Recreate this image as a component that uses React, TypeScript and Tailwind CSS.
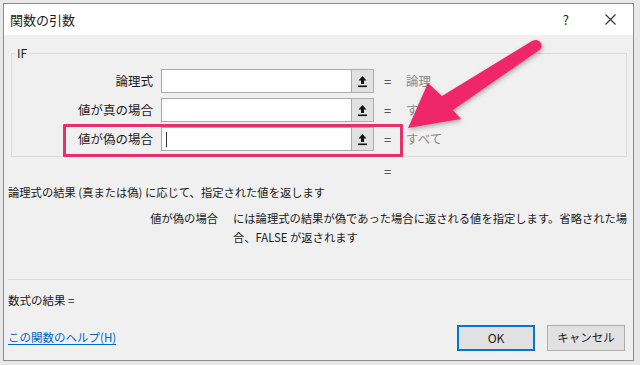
import React from 'react'

/* ==========================================================================
   ARGUMENT ROW
   ========================================================================== */

function ArgRow({ label, value, cursor }: { label: string; value: string; cursor?: boolean }) {
  return (
    <div className="flex items-center h-[24px]">
      <div className="w-[141px] text-right text-[12.5px] text-[#1a1a1a] leading-none">{label}</div>
      <div className="ml-[8px] w-[191px] h-[24px] bg-white border border-[#a9a9a9] flex items-center pl-[4px]">
        {cursor && <div className="w-[1px] h-[15px] bg-[#333]" />}
      </div>
      <div className="w-[22px] h-[24px] bg-[#e1e1e1] border border-[#adadad] border-l-0 flex items-center justify-center">
        <svg width="11" height="13" viewBox="0 0 11 13">
          <path d="M5.5 1 L1.5 5.5 H4 V9 H7 V5.5 H9.5 Z" fill="#111" />
          <rect x="1" y="10.5" width="9" height="1.6" fill="#111" />
        </svg>
      </div>
      <div className="ml-[10px] w-[8px] text-[13px] text-[#333] leading-none">=</div>
      <div className="ml-[14px] text-[12.5px] text-[#8a8a8a] leading-none">{value}</div>
    </div>
  )
}

/* ==========================================================================
   FUNCTION ARGUMENTS DIALOG
   ========================================================================== */

export default function App() {
  return (
    <div className="relative w-[640px] h-[365px] overflow-hidden bg-[#e8e8e8] pt-[3px] pl-[3px] font-['Noto_Sans_CJK_JP','Noto_Sans',sans-serif]">
      <div className="w-[631px] h-[358px] border border-[#8c8c8c] bg-[#f0f0f0] flex flex-col">
        {/* ── Title bar ─────────────────────────────────────────────── */}
        <div className="h-[31px] bg-white flex items-center pl-[6px] pr-[17px]">
          <span className="text-[13px] text-[#1a1a1a]">関数の引数</span>
          <span className="ml-auto text-[13px] text-[#222] leading-none">?</span>
          <svg className="ml-[36px]" width="11" height="11" viewBox="0 0 11 11">
            <path d="M0.5 0.5 L10.5 10.5 M10.5 0.5 L0.5 10.5" stroke="#333" strokeWidth="1.1" />
          </svg>
        </div>

        {/* ── IF group ──────────────────────────────────────────────── */}
        <fieldset className="mt-[11px] ml-[7px] mr-[6px] border border-[#dcdcdc] pt-[9px] pb-[5px] flex flex-col gap-[5px]">
          <legend className="ml-[3px] px-[2px] text-[12px] leading-[14px] text-[#1a1a1a]">IF</legend>
          <ArgRow label="論理式" value="論理" />
          <ArgRow label="値が真の場合" value="すべて" />
          <ArgRow label="値が偽の場合" value="すべて" cursor />
        </fieldset>

        <div className="mt-[7px] pl-[380px] text-[13px] leading-[16px] text-[#333]">=</div>

        {/* ── Description ───────────────────────────────────────────── */}
        <div className="mt-[4px] pl-[4px] text-[11.3px] leading-[16px] text-[#1a1a1a] whitespace-nowrap">
          論理式の結果 (真または偽) に応じて、指定された値を返します
        </div>
        <div className="mt-[9px] flex text-[11.3px] leading-[19px] text-[#1a1a1a] whitespace-nowrap">
          <div className="w-[214px] text-right">値が偽の場合</div>
          <div className="ml-[15px]">
            には論理式の結果が偽であった場合に返される値を指定します。省略された場
            <br />
            合、FALSE が返されます
          </div>
        </div>

        <div className="mt-[32px] ml-[4px] mr-[1px] border-t border-[#dadada]" />

        <div className="mt-[12px] pl-[4px] text-[11.5px] leading-[16px] text-[#1a1a1a]">数式の結果 =</div>

        {/* ── Footer ────────────────────────────────────────────────── */}
        <div className="mt-[17px] h-[26px] flex items-center pl-[4px] pr-[8px]">
          <a className="text-[11.5px] text-[#0066cc] underline underline-offset-2 cursor-pointer">
            この関数のヘルプ(H)
          </a>
          <button className="ml-auto w-[78px] h-[26px] bg-[#e1e1e1] border-2 border-[#0078d7] text-[12px] text-[#1a1a1a]">
            OK
          </button>
          <button className="ml-[12px] w-[78px] h-[26px] bg-[#e1e1e1] border border-[#adadad] text-[11.5px] text-[#1a1a1a]">
            キャンセル
          </button>
        </div>
      </div>

      {/* Highlight box */}
      <div className="absolute left-[63px] top-[124px] w-[340px] h-[33px] border-[3px] border-[#e5306a] rounded-[1px]" />

      {/* Pointer arrow */}
      <svg className="absolute left-0 top-0" width="640" height="365" viewBox="0 0 640 365">
        <defs>
          <filter id="shadow" x="-20%" y="-20%" width="140%" height="140%">
            <feDropShadow dx="1" dy="2" stdDeviation="2" floodColor="#000" floodOpacity="0.3" />
          </filter>
        </defs>
        <path
          d="M408 128 L428 83 L442 96 L532 41 Q538 38 541 43 Q543 48 538 51 L453 110 L461 119 Z"
          fill="#f0286a"
          filter="url(#shadow)"
        />
      </svg>
    </div>
  )
}
